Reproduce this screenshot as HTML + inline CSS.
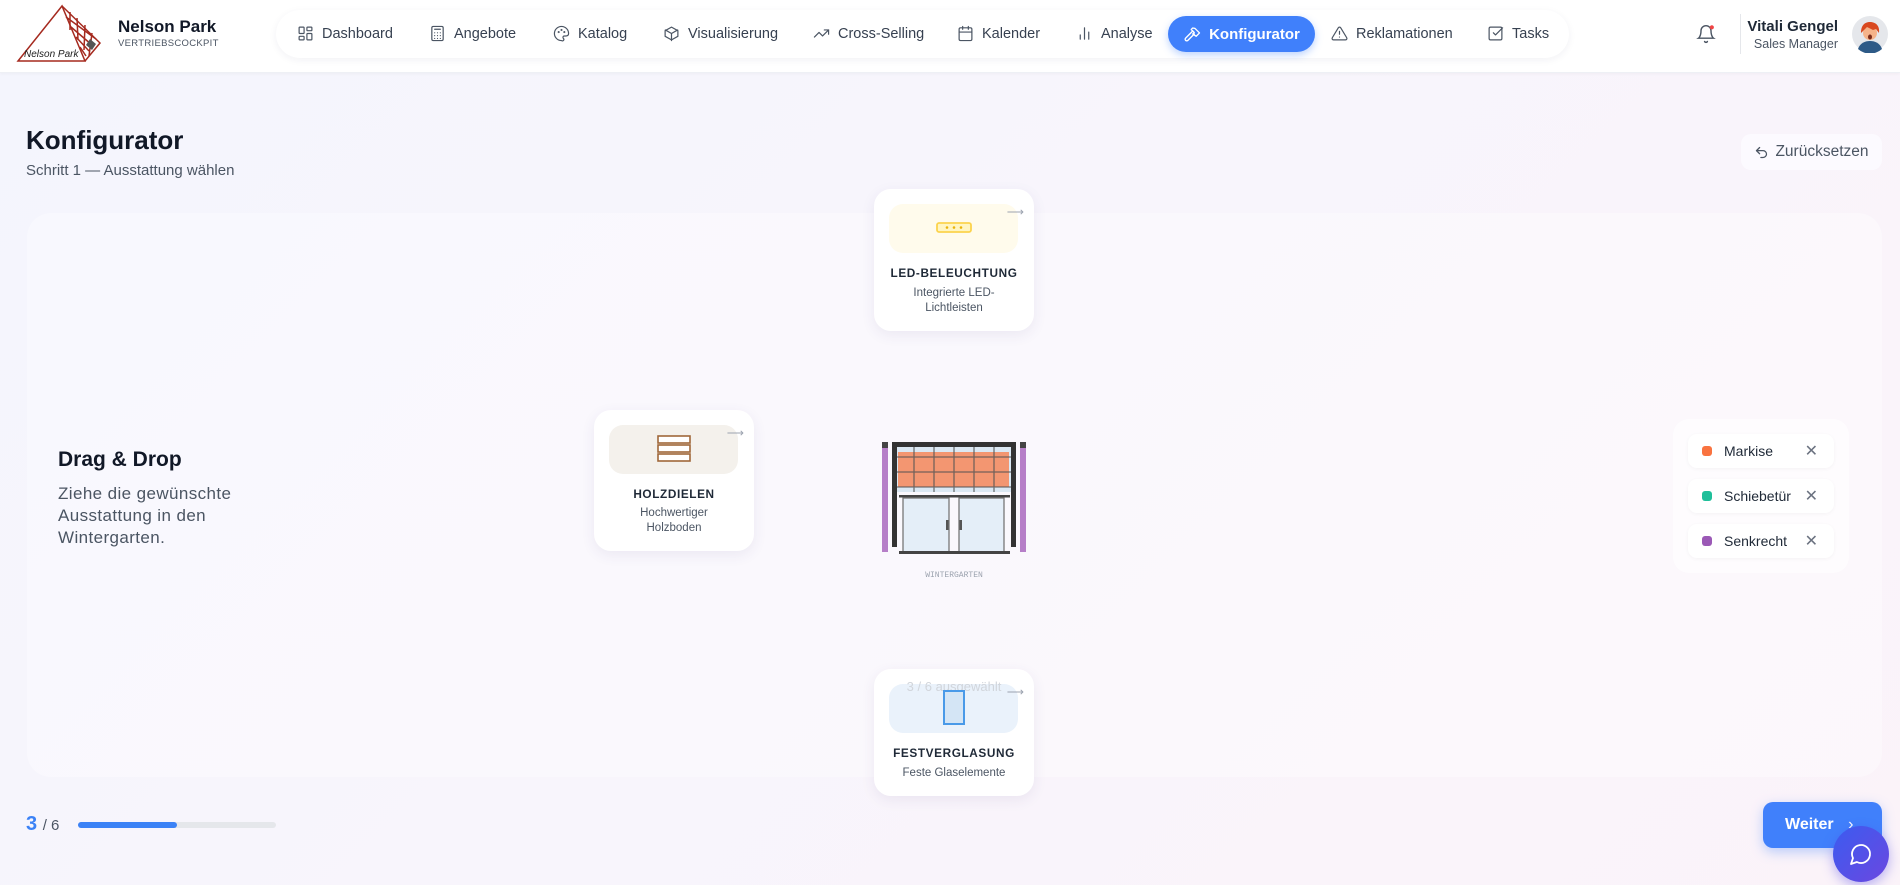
<!DOCTYPE html>
<html><head><meta charset="utf-8"><style>
*{box-sizing:border-box;margin:0;padding:0}
body{width:1900px;height:885px;overflow:hidden;font-family:"Liberation Sans",sans-serif;background:linear-gradient(135deg,#f4f5fd 0%,#f8f5fc 50%,#fbf3f9 100%);position:relative;color:#111827}
.abs{position:absolute}
header{position:absolute;left:0;top:0;width:1900px;height:73px;background:#fff;box-shadow:0 1px 3px rgba(0,0,0,.04);border-bottom:1px solid #eef0f5}
.nav{position:absolute;left:276px;top:10px;width:1293px;height:48px;background:#fff;border-radius:24px;box-shadow:0 2px 8px rgba(30,40,80,.06)}
.ni{position:absolute;top:25px;font-size:14.5px;color:#374151;display:flex;align-items:center;gap:8px;white-space:nowrap}
.ni svg{width:17px;height:17px;fill:none;stroke:#4b5563;stroke-width:1.7;stroke-linecap:round;stroke-linejoin:round}
.act{position:absolute;left:1168px;top:16px;width:147px;height:36px;background:#4080fb;border-radius:18px;box-shadow:0 3px 8px rgba(64,128,251,.35);color:#fff;font-weight:bold;font-size:15px;display:flex;align-items:center;justify-content:center;gap:8px}
.card{position:absolute;background:#fff;border-radius:17px;box-shadow:0 4px 14px rgba(60,50,120,.08);text-align:center}
.card .ib{position:absolute;left:15px;top:15px;width:129px;height:49px;border-radius:14px}
.card h4{position:absolute;left:0;right:0;font-size:11.8px;letter-spacing:.6px;color:#1f2937}
.card p{position:absolute;left:0;right:0;font-size:11.5px;color:#4b5563;line-height:15px}
.arr{position:absolute;right:10px;top:16px;color:#9ca3af;font-size:12px}
.row{position:absolute;left:15px;width:146px;height:34px;background:#fff;border-radius:9px;box-shadow:0 1px 4px rgba(0,0,0,.04);font-size:14px;color:#1f2937}
.row i{position:absolute;left:14px;top:12px;width:10px;height:10px;border-radius:3px}
.row span{position:absolute;left:36px;top:9px}
.row b{position:absolute;right:16px;top:7px;font-weight:normal;color:#6b7280;font-size:16px}
</style></head><body>
<header>
<svg class="abs" style="left:15px;top:4px" width="90" height="60" viewBox="15 4 90 60"><g fill="none" stroke="#a52a1f" stroke-width="1.5"><path d="M62 6 L18 61 L85 61 Z"/><path d="M62 6 L100 43 L85 61"/><path d="M66 17 L96 39 M71 27 L92 45 M76 37 L89 51 M80 47 L86 56 M70 12 L70 30 M77 18 L78 40 M85 25 L84 50 M92 33 L89 56"/></g><path d="M90 39 L96 44 L92 50 L86 45 Z" fill="#555"/><text x="24" y="57" font-size="10" font-style="italic" font-family="Liberation Sans" fill="#222">Nelson Park</text></svg>
<div class="abs" style="left:118px;top:17px;font-size:17px;font-weight:bold">Nelson Park</div>
<div class="abs" style="left:118px;top:38px;font-size:9.5px;color:#4b5563;letter-spacing:.3px">VERTRIEBSCOCKPIT</div>
<div class="nav"></div>
<div class="ni" style="left:297px"><svg viewBox="0 0 24 24"><rect x="3" y="3" width="7" height="9" rx="1"/><rect x="14" y="3" width="7" height="5" rx="1"/><rect x="14" y="12" width="7" height="9" rx="1"/><rect x="3" y="16" width="7" height="5" rx="1"/></svg>Dashboard</div>
<div class="ni" style="left:429px"><svg viewBox="0 0 24 24"><rect x="4" y="2" width="16" height="20" rx="2"/><path d="M8 6h8M8 11h.01M12 11h.01M16 11h.01M8 15h.01M12 15h.01M16 15h.01M8 19h.01M12 19h.01M16 19h.01"/></svg>Angebote</div>
<div class="ni" style="left:553px"><svg viewBox="0 0 24 24"><path d="M12 22a10 10 0 1 1 10-10c0 2.5-2 3.5-4 3.5h-2a2 2 0 0 0-1.5 3.3A2 2 0 0 1 12 22z"/><circle cx="8" cy="10" r=".6"/><circle cx="12" cy="7" r=".6"/><circle cx="16" cy="10" r=".6"/></svg>Katalog</div>
<div class="ni" style="left:663px"><svg viewBox="0 0 24 24"><path d="M21 16V8l-9-5-9 5v8l9 5 9-5z"/><path d="M3.3 7 12 12l8.7-5M12 22V12"/></svg>Visualisierung</div>
<div class="ni" style="left:813px"><svg viewBox="0 0 24 24"><path d="M22 7 13.5 15.5 8.5 10.5 2 17"/><path d="M16 7h6v6"/></svg>Cross-Selling</div>
<div class="ni" style="left:957px"><svg viewBox="0 0 24 24"><rect x="3" y="4" width="18" height="18" rx="2"/><path d="M16 2v4M8 2v4M3 10h18"/></svg>Kalender</div>
<div class="ni" style="left:1076px"><svg viewBox="0 0 24 24"><path d="M6 20v-6M12 20V4M18 20v-10"/></svg>Analyse</div>
<div class="act"><svg viewBox="0 0 24 24" width="18" height="18" fill="none" stroke="#fff" stroke-width="1.8" stroke-linecap="round" stroke-linejoin="round"><path d="m15 12-8.5 8.5a2.1 2.1 0 0 1-3-3L12 9"/><path d="M17.6 15 22 10.6 16 4.6 13 4l-2 2 4 4-2 2z"/></svg>Konfigurator</div>
<div class="ni" style="left:1331px"><svg viewBox="0 0 24 24"><path d="M10.3 3.9 1.8 18a2 2 0 0 0 1.7 3h17a2 2 0 0 0 1.7-3L13.7 3.9a2 2 0 0 0-3.4 0z"/><path d="M12 9v4M12 17h.01"/></svg>Reklamationen</div>
<div class="ni" style="left:1487px"><svg viewBox="0 0 24 24"><rect x="3" y="3" width="18" height="18" rx="2"/><path d="m9 11 3 3L22 4"/></svg>Tasks</div>
<svg class="abs" style="left:1696px;top:23px" width="20" height="22" viewBox="0 0 24 24" fill="none" stroke="#4b5563" stroke-width="1.7" stroke-linecap="round"><path d="M6 8a6 6 0 0 1 12 0c0 7 3 9 3 9H3s3-2 3-9"/><path d="M10.3 21a1.9 1.9 0 0 0 3.4 0"/><circle cx="19" cy="4" r="2.5" fill="#ef4444" stroke="none"/></svg>
<div class="abs" style="left:1740px;top:14px;width:1px;height:40px;background:#e5e7eb"></div>
<div class="abs" style="right:62px;top:18px;font-size:15px;font-weight:bold;color:#1f2937">Vitali Gengel</div>
<div class="abs" style="right:62px;top:37px;font-size:12.5px;color:#4b5563">Sales Manager</div>
<svg class="abs" style="left:1851px;top:15px" width="38" height="38" viewBox="0 0 38 38"><circle cx="19" cy="19" r="18" fill="#e5e7eb"/><path d="M7 34c2-6 7-8 12-8s10 2 12 8a18 18 0 0 1-24 0z" fill="#2d5a87"/><circle cx="19" cy="18" r="7" fill="#f5b38a"/><path d="M10 18c0-8 4-11 9-11s10 3 9 11l-3-4-3 1-6-3-3 3z" fill="#d9481f"/><ellipse cx="19" cy="22" rx="2" ry="2.5" fill="#7a2b1a"/></svg>
</header>

<div class="abs" style="left:26px;top:125px;font-size:26px;font-weight:bold;color:#111827">Konfigurator</div>
<div class="abs" style="left:26px;top:162px;font-size:15px;color:#4b5563">Schritt 1 — Ausstattung wählen</div>
<div class="abs" style="left:1741px;top:134px;width:141px;height:36px;background:#fcfaff;border-radius:10px;font-size:15.5px;color:#4b5563;display:flex;align-items:center;justify-content:center;gap:6px"><svg width="15" height="15" viewBox="0 0 24 24" fill="none" stroke="#4b5563" stroke-width="2" stroke-linecap="round" stroke-linejoin="round"><path d="M9 14 4 9l5-5"/><path d="M4 9h10.5a5.5 5.5 0 0 1 0 11H11"/></svg>Zurücksetzen</div>

<div class="abs" style="left:27px;top:213px;width:1855px;height:564px;border-radius:24px;background:rgba(255,255,255,.35)"></div>
<div class="abs" style="left:58px;top:448px;font-size:21px;font-weight:bold;color:#111827">Drag &amp; Drop</div>
<div class="abs" style="left:58px;top:483px;font-size:17px;letter-spacing:.4px;color:#4b5563;line-height:22px;width:240px">Ziehe die gewünschte<br>Ausstattung in den<br>Wintergarten.</div>

<div class="card" style="left:874px;top:189px;width:160px;height:142px">
<div class="ib" style="background:#fffbec"></div><span class="arr">⟶</span>
<svg class="abs" style="left:62px;top:33px" width="36" height="12"><rect x="1" y="1" width="34" height="9" rx="2" fill="#fff5c2" stroke="#fcd34d" stroke-width="1.8"/><circle cx="11" cy="5.5" r="1.3" fill="#eab308"/><circle cx="18" cy="5.5" r="1.3" fill="#eab308"/><circle cx="25" cy="5.5" r="1.3" fill="#eab308"/></svg>
<h4 style="top:77px">LED-BELEUCHTUNG</h4><p style="top:97px">Integrierte LED-<br>Lichtleisten</p></div>

<div class="card" style="left:594px;top:410px;width:160px;height:141px">
<div class="ib" style="background:#f4f1ec"></div><span class="arr">⟶</span>
<svg class="abs" style="left:62px;top:25px" width="36" height="28"><g fill="#fff" stroke="#a0683a" stroke-width="1.6"><rect x="2" y="1" width="32" height="7"/><rect x="2" y="10" width="32" height="7"/><rect x="2" y="19" width="32" height="7"/></g></svg>
<h4 style="top:77px">HOLZDIELEN</h4><p style="top:96px">Hochwertiger<br>Holzboden</p></div>

<div class="card" style="left:874px;top:669px;width:160px;height:127px">
<div class="ib" style="background:#eaf2fb"></div><span class="arr">⟶</span>
<div class="abs" style="left:0;right:0;top:10px;font-size:13px;color:#d1d5db">3 / 6 ausgewählt</div>
<svg class="abs" style="left:68px;top:20px" width="24" height="38"><rect x="2" y="2" width="20" height="33" fill="#d4e5f5" stroke="#4a9ae8" stroke-width="2"/></svg>
<h4 style="top:77px">FESTVERGLASUNG</h4><p style="top:97px">Feste Glaselemente</p></div>

<svg class="abs" style="left:880px;top:440px" width="148" height="116" viewBox="0 0 148 116">
<rect x="2" y="2" width="6" height="110" fill="#b67fc8"/><rect x="2" y="2" width="6" height="6" fill="#444"/>
<rect x="140" y="2" width="6" height="110" fill="#b67fc8"/><rect x="140" y="2" width="6" height="6" fill="#444"/>
<rect x="17" y="7" width="114" height="45" fill="#dbe8f3"/>
<rect x="18" y="12" width="111" height="35" fill="#f58e66" opacity=".92"/>
<g stroke="#555" stroke-width="1.3" opacity=".8"><path d="M34 7v45M54 7v45M74 7v45M94 7v45M114 7v45M17 17h114M17 32h114M17 47h114"/></g>
<rect x="12" y="2" width="124" height="5" fill="#333"/>
<rect x="12" y="2" width="5" height="105" fill="#333"/><rect x="131" y="2" width="5" height="105" fill="#333"/>
<rect x="19" y="55" width="111" height="2.5" fill="#444"/>
<rect x="23" y="58" width="46" height="54" fill="#e4eef8" stroke="#777" stroke-width="1.3"/>
<rect x="79" y="58" width="45" height="54" fill="#e4eef8" stroke="#777" stroke-width="1.3"/>
<rect x="66" y="80" width="2.5" height="10" fill="#555"/><rect x="79.5" y="80" width="2.5" height="10" fill="#555"/>
<rect x="19" y="111" width="111" height="3" fill="#444"/>
</svg>
<div class="abs" style="left:880px;top:571px;width:148px;text-align:center;font-family:'Liberation Mono',monospace;font-size:8px;color:#9ca3af">WINTERGARTEN</div>

<div class="abs" style="left:1673px;top:419px;width:176px;height:154px;border-radius:16px;background:rgba(255,255,255,.6)"></div>
<div class="abs" style="left:1673px;top:419px;width:176px;height:154px">
<div class="row" style="top:15px"><i style="background:#f97340"></i><span>Markise</span><b>✕</b></div>
<div class="row" style="top:60px"><i style="background:#1fbf9a"></i><span>Schiebetür</span><b>✕</b></div>
<div class="row" style="top:105px"><i style="background:#9b59b6"></i><span>Senkrecht</span><b>✕</b></div>
</div>

<div class="abs" style="left:26px;top:813px;font-size:20px;font-weight:bold;color:#3b82f6">3 <span style="font-size:15px;font-weight:normal;color:#4b5563">/ 6</span></div>
<div class="abs" style="left:78px;top:822px;width:198px;height:6px;border-radius:3px;background:#e5e7eb"><div style="width:99px;height:6px;border-radius:3px;background:#3b82f6"></div></div>
<div class="abs" style="left:1763px;top:802px;width:119px;height:46px;border-radius:10px;background:#4080fb;box-shadow:0 4px 12px rgba(64,128,251,.35);color:#fff;font-weight:bold;font-size:16px;padding:14px 0 0 22px">Weiter <span style="font-weight:normal;margin-left:10px">›</span></div>
<div class="abs" style="left:1833px;top:826px;width:56px;height:56px;border-radius:50%;background:linear-gradient(135deg,#3b5cf0,#6b47e0);box-shadow:0 4px 12px rgba(79,70,229,.4)"><svg style="position:absolute;left:16px;top:16px" width="24" height="24" viewBox="0 0 24 24" fill="none" stroke="#fff" stroke-width="1.8" stroke-linejoin="round"><path d="M7.9 20A9 9 0 1 0 4 16.1L2 22z"/></svg></div>
</body></html>
